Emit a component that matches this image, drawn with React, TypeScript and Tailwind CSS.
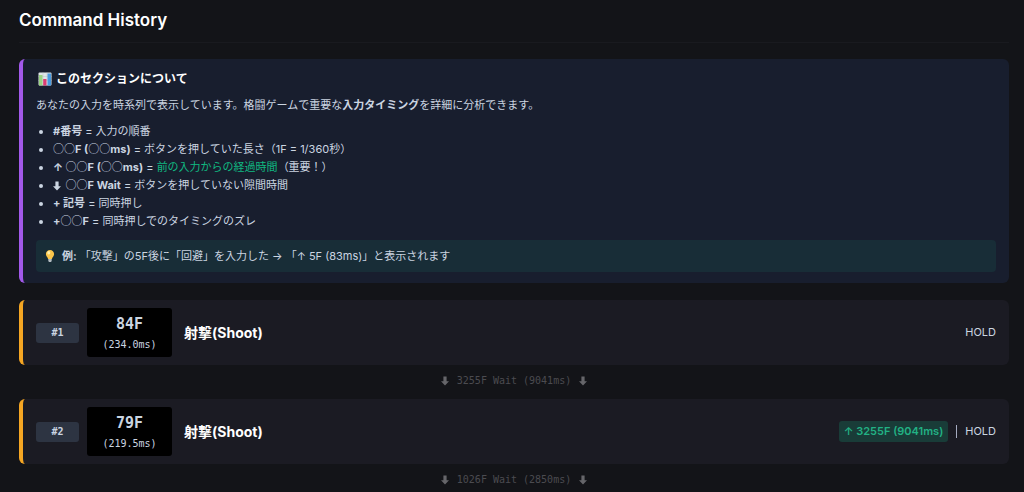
import React from 'react';

interface CommandEntry {
  id: number;
  frames: number;
  ms: string;
  name: string;
  sincePrev?: string;
  wait: string;
}

const commands: CommandEntry[] = [
  { id: 1, frames: 84, ms: '234.0ms', name: '射撃(Shoot)', wait: '3255F Wait (9041ms)' },
  { id: 2, frames: 79, ms: '219.5ms', name: '射撃(Shoot)', sincePrev: '3255F (9041ms)', wait: '1026F Wait (2850ms)' },
];

function ChartIcon() {
  return (
    <svg viewBox="0 0 14 14" className="w-[14px] h-[14px] shrink-0" aria-hidden="true">
      <rect x="0.5" y="0.5" width="13" height="13" rx="1" fill="#dfe5e8" />
      <path d="M0.5 4.5h13M0.5 8.5h13M5 0.5v13M9 0.5v13" stroke="#b8c4cc" strokeWidth="0.5" />
      <rect x="1" y="3" width="3.500" height="10.500" fill="#9bd383" />
      <rect x="5.200" y="7" width="3.300" height="6.500" fill="#dc3c72" />
      <rect x="9.500" y="1.500" width="3.500" height="12" fill="#4a9be0" />
    </svg>
  );
}

function BulbIcon() {
  return (
    <svg viewBox="0 0 12 14" className="w-3 h-[14px] shrink-0" aria-hidden="true">
      <path d="M6 1C3.600 1 1.900 2.800 1.900 5c0 2.200 1.900 3.200 2.200 5h3.800c.3-1.800 2.200-2.800 2.200-5C10.100 2.800 8.400 1 6 1z" fill="#fbc64b" />
      <ellipse cx="4.800" cy="3.800" rx="1.500" ry="1.800" fill="#fff0ad" />
      <path d="M4.300 10h3.400v2L7 13H5l-.7-1z" fill="#b4bcc2" />
    </svg>
  );
}

function DownArrow({ className = '' }: { className?: string }) {
  return (
    <svg viewBox="0 0 8 10" className={`inline-block w-2 h-[10px] ${className}`} fill="currentColor" aria-hidden="true">
      <path d="M2.400 0.500h3.200v4.700H8L4 9.600 0 5.200h2.400z" />
    </svg>
  );
}

// Placeholder digits, set in the full-width face so they line up with the kana
function Circles() {
  return <span className="font-['Noto_Sans_CJK_JP',sans-serif] leading-none font-normal">○○</span>;
}

function AboutSection() {
  return (
    <section className="rounded-md border-l-4 border-[#a259ea] bg-[#181e2e] px-[13px] py-[11px] text-[11px] leading-[18px] text-[#cbd5e1]">
      <h3 className="flex items-center gap-1 pl-0.5 text-xs leading-[18px] font-bold text-white">
        <ChartIcon />
        このセクションについて
      </h3>
      <p className="mt-2">
        あなたの入力を時系列で表示しています。格闘ゲームで重要な<strong>入力タイミング</strong>を詳細に分析できます。
      </p>
      <ul className="mt-2 list-disc pl-[17px]">
        <li><strong>#番号</strong> = 入力の順番</li>
        <li><strong><Circles />F (<Circles />ms)</strong> = ボタンを押していた長さ（1F = 1/360秒）</li>
        <li><strong>↑ <Circles />F (<Circles />ms)</strong> = <span className="text-[#10b981]">前の入力からの経過時間</span>（重要！）</li>
        <li><strong><DownArrow className="mr-0.5" /> <Circles />F Wait</strong> = ボタンを押していない隙間時間</li>
        <li><strong>+ 記号</strong> = 同時押し</li>
        <li><strong>+<Circles />F</strong> = 同時押しでのタイミングのズレ</li>
      </ul>
      <div className="mt-[10px] flex items-center gap-[6px] rounded-sm bg-[#182d37] px-2 py-[7px]">
        <BulbIcon />
        <p><strong>例:</strong> 「攻撃」の5F後に「回避」を入力した → 「↑ 5F (83ms)」と表示されます</p>
      </div>
    </section>
  );
}

function CommandRow({ entry }: { entry: CommandEntry }) {
  return (
    <div className="flex items-center rounded-md border-l-4 border-[#f5a623] bg-[#1b1b23] px-[13px] py-2">
      <span className="w-[43px] rounded-[3px] bg-[#2d3442] text-center font-['DejaVu_Sans_Mono','Liberation_Mono',monospace] text-[10px] leading-5 font-bold text-[#cbd5e1]">
        #{entry.id}
      </span>
      <div className="ml-2 w-[85px] rounded-[3px] bg-black py-1 text-center font-['DejaVu_Sans_Mono','Liberation_Mono',monospace] text-[#cbd5e1]">
        <div className="text-[15px] leading-6 font-bold">{entry.frames}F</div>
        <div className="text-[10px] leading-[17px]">({entry.ms})</div>
      </div>
      <span className="ml-3 text-[14px] leading-[18px] font-bold text-white">{entry.name}</span>
      <div className="ml-auto flex items-center gap-2 text-[11px] text-[#cbd5e1]">
        {entry.sincePrev && (
          <>
            <span className="rounded-[3px] bg-[#193c38] px-[5px] leading-[21px] font-semibold text-[#22b184]">↑ {entry.sincePrev}</span>
            <span className="h-[13px] border-l border-[#a5abc0]" />
          </>
        )}
        <span>HOLD</span>
      </div>
    </div>
  );
}

export default function App() {
  return (
    <main className="min-h-screen bg-[#131418] pt-2 pr-[15px] pl-[19px] font-[Inter,'Noto_Sans_CJK_JP',sans-serif]" lang="ja">
      <h2 className="mb-4 border-b border-[#191a1f] pb-[10px] text-[17px] leading-6 font-semibold text-white">Command History</h2>
      <AboutSection />
      <div className="mt-[17px]">
        {commands.map((entry) => (
          <React.Fragment key={entry.id}>
            <CommandRow entry={entry} />
            <div className="flex items-center justify-center gap-2 pt-[7px] pb-[9px] font-['DejaVu_Sans_Mono','Liberation_Mono',monospace] text-[10px] leading-[18px] text-[#4b4b50] last:pb-0">
              <DownArrow className="text-[#66666a]" />
              {entry.wait}
              <DownArrow className="text-[#66666a]" />
            </div>
          </React.Fragment>
        ))}
      </div>
    </main>
  );
}
